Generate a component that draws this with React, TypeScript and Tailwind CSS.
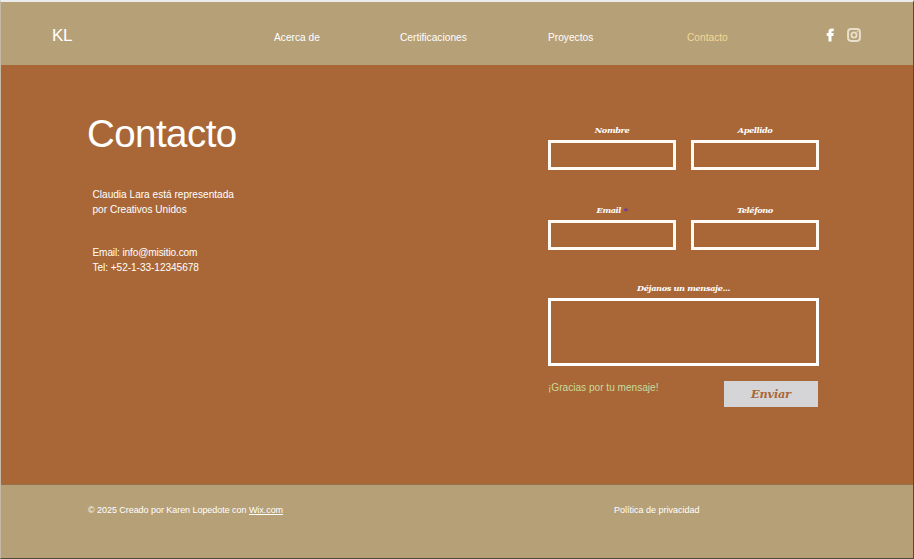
import React from 'react';

const serif = "font-['DejaVu_Serif',serif] font-bold italic";

function Field({ label, required }: { label: string; required?: boolean }) {
  return (
    <label className="flex flex-col">
      <span className={`${serif} h-[15px] text-center text-[8.2px] leading-[10px] tracking-[-0.4px] whitespace-nowrap`}>
        {label}
        {required && <span className="text-[#5f2bc4]"> *</span>}
      </span>
      <input className="block h-[30px] w-full border-3 border-[#fffaf3] bg-transparent px-2 text-xs outline-none" />
    </label>
  );
}

export default function App() {
  return (
    <div className="flex h-[559px] w-[914px] flex-col overflow-hidden border-t-2 border-r border-b border-l border-t-[#ececec] border-r-[#504b3c] border-b-[#514b38] border-l-[#c5b9a6] bg-[#a96737] font-['Liberation_Sans',Arial,sans-serif] text-white">
      <header className="flex h-[63px] shrink-0 bg-[#b6a077] text-[10.2px] leading-3 whitespace-nowrap">
        <div className="ml-[51px] w-[222px] pt-[24px] text-[17px] leading-5 tracking-[-0.4px]">KL</div>
        <nav className="flex pt-[30px]">
          <a className="w-[126px]">Acerca de</a>
          <a className="w-[148px]">Certificaciones</a>
          <a className="w-[139px]">Proyectos</a>
          <a className="w-[138px] text-[#f2d895]">Contacto</a>
        </nav>
        <div className="flex pt-[26px]">
          <svg className="ml-px h-[14px] w-[9px]" viewBox="0 0 9 14" fill="#fff">
            <path d="M2.5 13.6V8H.7V5.1h1.8V3.8C2.5 1.6 3.8.6 5.8.6h1.9v2.7H6.5c-.8 0-1 .4-1 1v.8h2.2L7.4 8H5.5v5.6z" />
          </svg>
          <svg className="ml-[12px] h-[14px] w-[14px]" viewBox="0 0 14 14" fill="none" stroke="#e9dfca">
            <rect x="1.1" y="1.1" width="11.8" height="11.8" rx="2.8" strokeWidth="2" />
            <circle cx="7" cy="7" r="2.6" strokeWidth="1.8" />
            <circle cx="10.4" cy="3.6" r=".6" fill="#e9dfca" strokeWidth=".4" />
          </svg>
        </div>
      </header>

      <main className="flex h-[419px] shrink-0">
        <section className="w-[547px] pt-[46px] pl-[86px]">
          <h1 className="text-[38.5px] leading-[46px] tracking-[-0.55px]">Contacto</h1>
          <div className="pt-[30px] pl-[5.5px] text-[10.1px] leading-[15px]">
            <p>Claudia Lara está representada<br />por Creativos Unidos</p>
            <p className="mt-[28px]"><span className="tracking-[-0.13px]">Email: info@misitio.com</span><br /><span className="tracking-[-0.05px]">Tel: +52-1-33-12345678</span></p>
          </div>
        </section>

        <form className="w-[271px] pt-[60px]">
          <div className="grid grid-cols-[128px_128px] gap-x-[15px] gap-y-[35px]">
            <Field label="Nombre" />
            <Field label="Apellido" />
            <Field label="Email" required />
            <Field label="Teléfono" />
          </div>
          <label className="mt-[33px] block">
            <span className={`${serif} block h-[15px] text-center text-[8.2px] leading-[10px] tracking-[-0.36px]`}>Déjanos un mensaje...</span>
            <textarea className="block h-[68px] w-full resize-none border-3 border-white bg-transparent p-2 text-xs outline-none" />
          </label>
          <div className="mt-[15px] flex w-[270px] justify-between">
            <span className="pt-px text-[10.1px] leading-3 text-[#c5dc9c]">¡Gracias por tu mensaje!</span>
            <button type="button" className={`${serif} h-[26px] w-[94px] bg-[#d5d4d6] text-[11.3px] tracking-[-0.2px] text-[#a96737]`}>Enviar</button>
          </div>
        </form>
      </main>

      <footer className="flex h-[74px] shrink-0 border-t border-[#927249] bg-[#b6a077] pt-[19px] text-[9px] leading-3 whitespace-nowrap">
        <span className="ml-[87px] w-[526px] tracking-[-0.05px]">© 2025 Creado por Karen Lopedote con <a className="underline">Wix.com</a></span>
        <a>Política de privacidad</a>
      </footer>
    </div>
  );
}
